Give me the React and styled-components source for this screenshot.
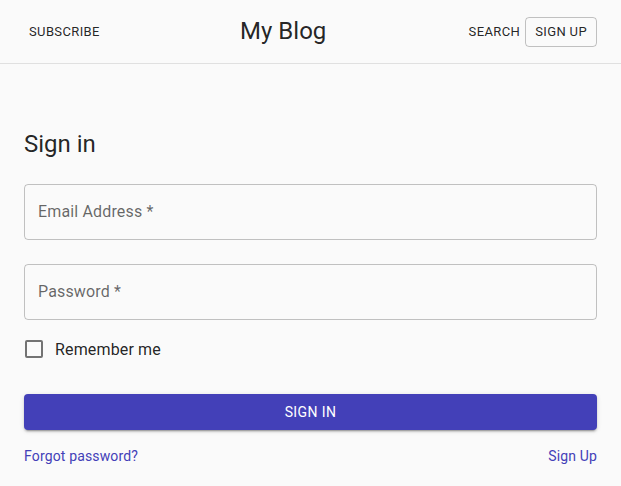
import React from "react";
import styled, { createGlobalStyle } from "styled-components";

const GlobalStyle = createGlobalStyle`
  body {
    margin: 0;
    background: #fafafa;
    font-family: Roboto, "Helvetica", "Arial", sans-serif;
    color: rgba(0, 0, 0, 0.87);
  }
`;

const App = () => {
  return (
    <>
      <GlobalStyle />
      <Toolbar>
        <TextButton>Subscribe</TextButton>
        <Title>My Blog</Title>
        <TextButton>Search</TextButton>
        <OutlinedButton>Sign up</OutlinedButton>
      </Toolbar>

      <Main>
        <Heading>Sign in</Heading>
        <Field>
          <Placeholder>Email Address *</Placeholder>
        </Field>
        <Field>
          <Placeholder>Password *</Placeholder>
        </Field>
        <CheckRow>
          <CheckBox />
          <CheckLabel>Remember me</CheckLabel>
        </CheckRow>
        <SubmitButton>Sign in</SubmitButton>
        <LinkRow>
          <Link href="#">Forgot password?</Link>
          <Link href="#">Sign Up</Link>
        </LinkRow>
      </Main>
    </>
  );
};

export default App;

const Toolbar = styled.header`
  display: flex;
  align-items: center;
  height: 63px;
  padding: 0 24px;
  border-bottom: 1px solid #e0e0e0;
`;

const TextButton = styled.button`
  font-family: Roboto, sans-serif;
  font-size: 13px;
  font-weight: 400;
  letter-spacing: 0.02857em;
  text-transform: uppercase;
  line-height: 22px;
  padding: 4px 5px;
  background: none;
  border: none;
  color: rgba(0, 0, 0, 0.87);
`;

const OutlinedButton = styled(TextButton)`
  padding: 3px 9px;
  border: 1px solid rgba(0, 0, 0, 0.23);
  border-radius: 4px;
`;

const Title = styled.h2`
  flex: 1;
  margin: 0 2px 0 0;
  text-align: center;
  font-size: 24px;
  font-weight: 400;
  line-height: 1.334;
`;

const Main = styled.main`
  display: flex;
  flex-direction: column;
  padding: 64px 24px 0;
`;

const Heading = styled.h1`
  margin: 0 0 8px;
  font-size: 24px;
  font-weight: 400;
  line-height: 32px;
`;

const Field = styled.div`
  display: flex;
  align-items: center;
  box-sizing: border-box;
  height: 56px;
  margin: 16px 0 8px;
  padding: 0 13px 1px;
  border: 1px solid rgba(0, 0, 0, 0.23);
  border-radius: 4px;
`;

const Placeholder = styled.span`
  font-size: 16px;
  color: rgba(0, 0, 0, 0.6);
  letter-spacing: 0.00938em;
`;

const CheckRow = styled.label`
  display: flex;
  align-items: center;
  height: 42px;
`;

const CheckBox = styled.span`
  box-sizing: border-box;
  width: 18px;
  height: 18px;
  margin: 0 12px 0 1px;
  border: 2px solid rgba(0, 0, 0, 0.54);
  border-radius: 2px;
`;

const CheckLabel = styled.span`
  font-size: 16px;
  letter-spacing: 0.00938em;
`;

const SubmitButton = styled.button`
  margin: 24px 0 16px;
  height: 36px;
  border: none;
  border-radius: 4px;
  background: #4340b8;
  color: #fff;
  font-family: Roboto, sans-serif;
  font-size: 14px;
  font-weight: 400;
  letter-spacing: 0.02857em;
  text-transform: uppercase;
  box-shadow: 0 3px 1px -2px rgba(0, 0, 0, 0.2), 0 2px 2px 0 rgba(0, 0, 0, 0.14),
    0 1px 5px 0 rgba(0, 0, 0, 0.12);
`;

const LinkRow = styled.div`
  display: flex;
  justify-content: space-between;
  line-height: 20px;
`;

const Link = styled.a`
  font-size: 14px;
  color: #4340b8;
  text-decoration: none;
  letter-spacing: 0.01071em;
`;
